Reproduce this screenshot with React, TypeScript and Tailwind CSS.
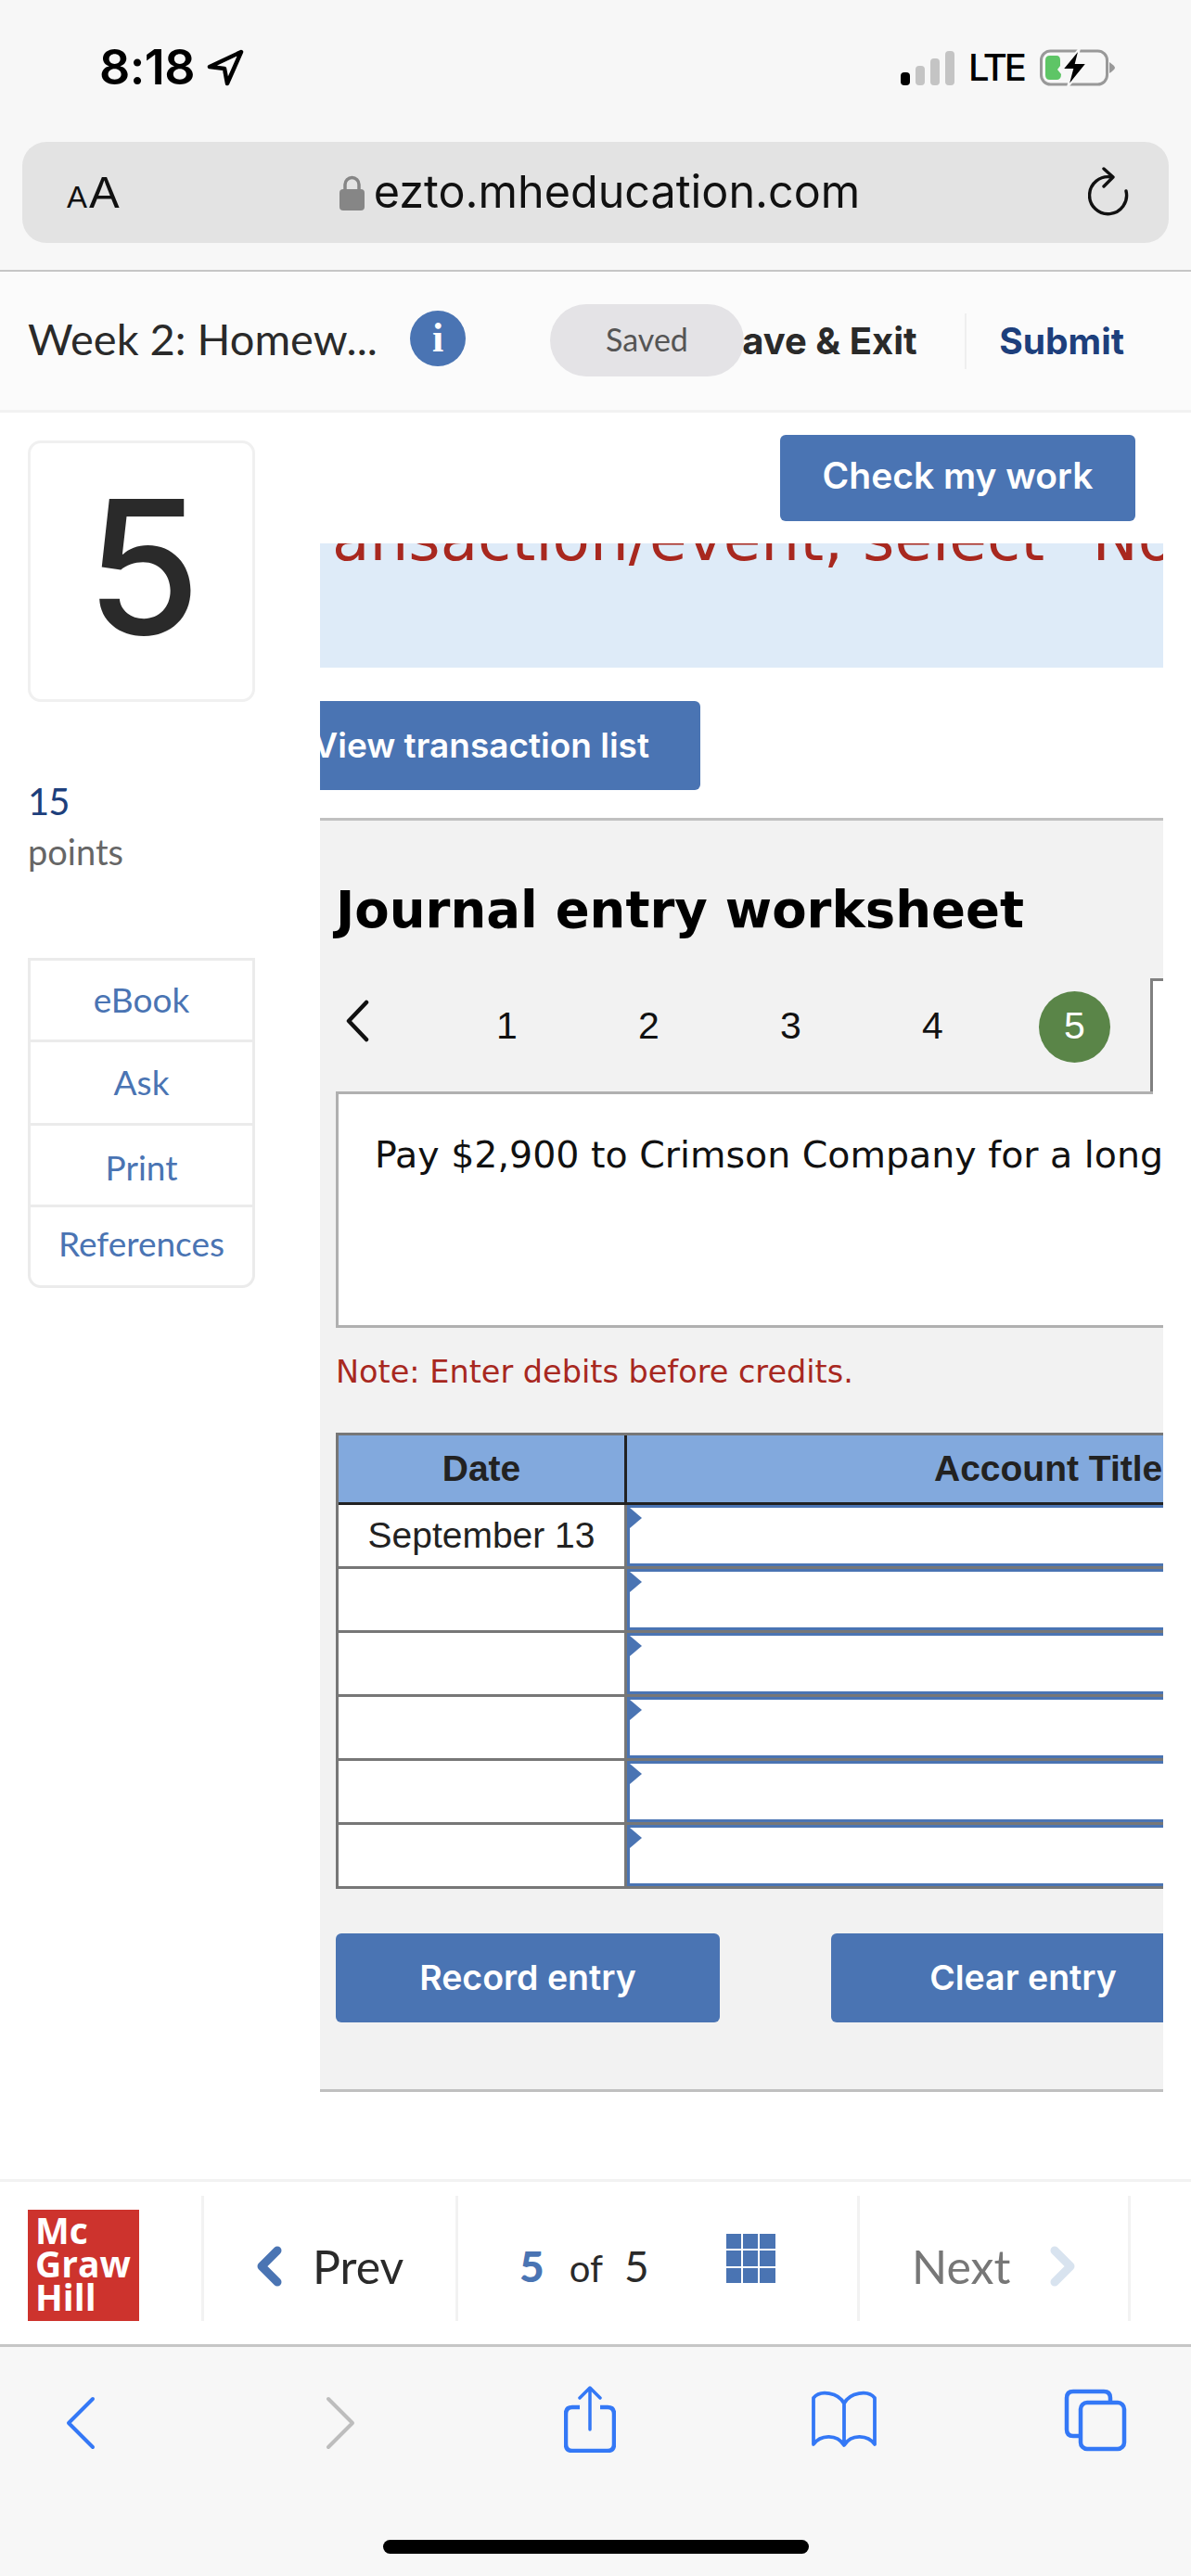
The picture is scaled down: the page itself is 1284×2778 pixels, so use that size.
import React from "react";

const lato = "font-['Lato',sans-serif]";
const dejavu = "font-['DejaVu_Sans',sans-serif]";
const arial = "font-['Liberation_Sans',sans-serif]";
const inter = "font-['Inter',sans-serif]";

function StatusBar() {
  return (
    <div className={`h-[153px] shrink-0 flex items-start justify-between pt-[53px] pl-[107px] pr-[82px] ${inter}`}>
      <div className="flex items-center h-[40px] gap-[13px]">
        <span className="text-[52px] font-semibold leading-none text-black tracking-[-0.5px]">8:18</span>
        <svg width="40" height="40" viewBox="0 0 40 40">
          <path d="M37 3 L3 19 L19 21 L22 37 Z" fill="none" stroke="#000" strokeWidth="4.5" strokeLinejoin="round" />
        </svg>
      </div>
      <div className="flex items-center h-[40px]">
        <div className="flex items-end gap-[6px] h-[38px] mr-[15px]">
          <div className="w-[10px] h-[14px] rounded-[4px] bg-black" />
          <div className="w-[10px] h-[21px] rounded-[4px] bg-[#c4c4c4]" />
          <div className="w-[10px] h-[29px] rounded-[4px] bg-[#c4c4c4]" />
          <div className="w-[10px] h-[37px] rounded-[4px] bg-[#c4c4c4]" />
        </div>
        <span className="text-[40px] font-medium leading-none text-black mr-[17px] tracking-[-3px]">LTE</span>
        <svg width="81" height="42" viewBox="0 0 81 42">
          <rect x="1.5" y="3" width="71" height="36" rx="10" fill="none" stroke="#999" strokeWidth="3" />
          <path d="M75 15 Q81 19 81 21 Q81 23 75 27 Z" fill="#999" />
          <path d="M6 13 Q6 8 11 8 L18 8 Q22 8 22 13 L22 19 L19 23 L23 28 Q23 34 18 34 L11 34 Q6 34 6 29 Z" fill="#5ec566" />
          <path d="M43 0 L24 23 L35 23 L30 42 L51 16 L39 16 Z" fill="#000" stroke="#f7f7f7" strokeWidth="2" />
        </svg>
      </div>
    </div>
  );
}

function AddressBar() {
  return (
    <div className="h-[138px] px-[24px] shrink-0">
      <div className="h-[109px] rounded-[26px] bg-[#e3e3e3] flex items-center relative">
        <div className={`flex items-baseline ml-[48px] text-[#111] ${arial}`}>
          <span className="text-[33px] leading-none">A</span>
          <span className="text-[49px] leading-none ml-[2px]">A</span>
        </div>
        <div className={`flex items-center ml-[237px] ${inter}`}>
          <svg width="27" height="38" viewBox="0 0 27 38" className="mr-[10px]">
            <path d="M6 17 V10 a7.5 7.5 0 0 1 15 0 V17" fill="none" stroke="#868686" strokeWidth="3.5" />
            <rect x="0" y="15" width="27" height="23" rx="4" fill="#868686" />
          </svg>
          <span className="text-[48.5px] leading-none text-[#111]">ezto.mheducation.com</span>
        </div>
        <svg width="46" height="56" viewBox="0 0 46 56" className="ml-[246px]">
          <path d="M25 11 A20 20 0 1 0 41 26" fill="none" stroke="#111" strokeWidth="3.4" strokeLinecap="round" />
          <path d="M17 2 L27 11 L17 21" fill="none" stroke="#111" strokeWidth="3.4" strokeLinecap="round" strokeLinejoin="round" />
        </svg>
      </div>
    </div>
  );
}

function Header() {
  return (
    <div className={`h-[154px] shrink-0 border-t-[2px] border-b-[3px] border-t-[#c6c6c6] border-b-[#f2f2f2] bg-[#fbfbfb] flex items-center pb-[5px] relative ${lato}`}>
      <span className="ml-[30px] text-[47px] leading-none text-[#2a2a2a] w-[412px] whitespace-nowrap">Week 2: Homew...</span>
      <div className="w-[60px] h-[60px] rounded-full bg-[#4a74b3] flex items-center justify-center">
        <span className="text-[44px] font-bold text-white font-['Liberation_Serif',serif] leading-none">i</span>
      </div>
      <span className={`ml-[272px] text-[40px] font-bold text-[#2a2a2a] leading-none mt-[5px] whitespace-nowrap ${inter}`}>Save &amp; Exit</span>
      <div className="w-[2px] h-[60px] bg-[#efefef] ml-auto mt-[6px]" />
      <span className={`ml-[35px] mr-[72px] text-[39px] font-bold text-[#1d3f7c] leading-none mt-[5px] ${inter}`}>Submit</span>
      <div className="absolute left-[593px] top-[35px] w-[209px] h-[78px] rounded-[39px] bg-[#e4e3e6] flex items-center justify-center pb-[2px]">
        <span className="text-[34px] text-[#555] leading-none">Saved</span>
      </div>
    </div>
  );
}

function Sidebar() {
  const items = [
    { t: "eBook", c: "h-[88px] pb-[2px]" },
    { t: "Ask", c: "h-[90px] pb-[2px]" },
    { t: "Print", c: "h-[88px] pt-[4px]" },
    { t: "References", c: "h-[84px] pb-[6px]" },
  ];
  return (
    <div className={`w-[345px] shrink-0 pl-[30px] pt-[30px] ${lato}`}>
      <div className="w-[245px] h-[282px] border-[3px] border-[#f0f0f0] rounded-[14px] flex items-center justify-center pb-[10px] pl-[4px]">
        <span className={`text-[200px] font-medium leading-none text-[#2a2a2a] ${inter}`}>5</span>
      </div>
      <div className="mt-[86px] text-[40px] leading-[42px] text-[#1d3f7c] tracking-[-1px]">15</div>
      <div className="mt-[14px] text-[38px] leading-[38px] text-[#666]">points</div>
      <div className="mt-[96px] w-[245px] border-[3px] border-[#ebebeb] rounded-b-[14px] flex flex-col divide-y-[3px] divide-[#ebebeb]">
        {items.map((i) => (
          <div key={i.t} className={`${i.c} flex items-center justify-center text-[37px] text-[#4a74b3]`}>{i.t}</div>
        ))}
      </div>
    </div>
  );
}

function Flag() {
  return (
    <svg width="14" height="22" viewBox="0 0 14 22" className="absolute left-0 top-0">
      <path d="M0 0 L13 11 L0 22 Z" fill="#4a74b3" />
    </svg>
  );
}

function Table() {
  const rows = ["September 13", "", "", "", "", ""];
  return (
    <div className={`ml-[17px] w-[1000px] border-t-[3px] border-l-[3px] border-[#777] ${arial}`}>
      <div className="flex h-[75px] bg-[#82a9dd] border-b-[3px] border-[#222]">
        <div className="w-[311px] border-r-[3px] border-[#222] flex items-center justify-center text-[39px] font-bold text-[#222]">Date</div>
        <div className="flex-1 flex items-center pl-[331px] text-[39px] font-bold text-[#222] whitespace-nowrap">Account Title</div>
      </div>
      {rows.map((r, i) => (
        <div key={i} className="flex h-[69px] border-b-[3px] border-[#777] bg-white">
          <div className="w-[311px] border-r-[3px] border-[#777] flex items-center justify-center text-[39px] text-[#222]">{r}</div>
          <div className="flex-1 relative border-[3px] border-r-0 border-[#4a74b3]">
            <Flag />
          </div>
        </div>
      ))}
    </div>
  );
}

function Btn({ children, className }: { children: React.ReactNode; className: string }) {
  return (
    <div className={`bg-[#4a74b3] rounded-[6px] flex items-center text-white font-semibold whitespace-nowrap ${inter} ${className}`}>
      {children}
    </div>
  );
}

function Content() {
  const tabs = ["1", "2", "3", "4"];
  return (
    <div className="w-[909px] shrink-0 overflow-hidden">
      <div className="flex justify-end pt-[24px] pr-[30px]">
        <Btn className="w-[383px] h-[93px] justify-center pb-[4px] text-[39px]">Check my work</Btn>
      </div>
      <div className="mt-[24px] h-[134px] bg-[#deebf8] overflow-hidden">
        <div className={`-mt-[37px] ml-[13px] text-[66px] leading-none text-[#a8281f] whitespace-nowrap ${dejavu}`}>
          ansaction/event, select "No
        </div>
      </div>
      <Btn className="mt-[36px] w-[410px] h-[96px] justify-end pr-[55px] rounded-l-none overflow-hidden text-[37px]">View transaction list</Btn>
      <div className="mt-[30px] bg-[#f2f2f2] border-t-[3px] border-b-[3px] border-[#c0c0c0] h-[1374px] overflow-hidden">
        <div className={`ml-[17px] pt-[69px] h-[123px] text-[54.5px] font-bold leading-none text-black whitespace-nowrap ${dejavu}`}>
          Journal entry worksheet
        </div>
        <div className="flex h-[122px] ml-[17px] mt-[47px]">
          <div className="w-[108px] flex items-center pl-[9px] pb-[30px]">
            <svg width="28" height="46" viewBox="0 0 28 46">
              <path d="M24 3 L5 23 L24 43" fill="none" stroke="#111" strokeWidth="4.5" strokeLinecap="round" strokeLinejoin="round" />
            </svg>
          </div>
          {tabs.map((t) => (
            <div key={t} className={`w-[153px] flex items-center justify-center text-[41px] text-[#111] pb-[18px] ${arial}`}>{t}</div>
          ))}
          <div className="w-[153px] flex items-center justify-center pb-[18px]">
            <div className={`w-[77px] h-[77px] rounded-full bg-[#5a8548] flex items-center justify-center text-[41px] text-white ${arial}`}>5</div>
          </div>
          <div className="w-[5px]" />
          <div className="flex-1 bg-white border-l-[3px] border-t-[3px] border-[#808080]" />
        </div>
        <div className="ml-[17px] h-[255px] bg-white border-l-[3px] border-b-[3px] border-[#b0b0b0] overflow-hidden">
          <div className="w-[878px] h-[3px] bg-[#b0b0b0]" />
          <div className={`pl-[39px] pt-[46px] text-[39.5px] leading-none text-[#111] whitespace-nowrap ${dejavu}`}>
            Pay $2,900 to Crimson Company for a long-term note payable.
          </div>
        </div>
        <div className={`ml-[17px] mt-[31px] text-[33.5px] leading-[34px] text-[#a8281f] whitespace-nowrap ${dejavu}`}>
          Note: Enter debits before credits.
        </div>
        <div className="mt-[48px]">
          <Table />
        </div>
        <div className="flex ml-[17px] mt-[48px] w-[1000px]">
          <Btn className="w-[414px] h-[96px] justify-center text-[37.5px]">Record entry</Btn>
          <Btn className="w-[414px] h-[96px] ml-[120px] justify-center text-[37.5px]">Clear entry</Btn>
        </div>
      </div>
    </div>
  );
}

function Divider() {
  return <div className="w-[3px] h-[135px] bg-[#f2f2f2] shrink-0" />;
}

function BottomNav() {
  return (
    <div className={`h-[178px] shrink-0 border-t-[3px] border-[#f2f2f2] bg-white flex items-start pt-[15px] ${lato}`}>
      <div className="w-[217px] h-[135px] flex items-end pl-[30px] shrink-0">
        <div className="w-[120px] h-[120px] bg-[#cd332d] pl-[8px] pt-[4px] text-white font-bold text-[39px] leading-[36px] font-['Open_Sans',sans-serif]">
          <div>Mc</div>
          <div>Graw</div>
          <div>Hill</div>
        </div>
      </div>
      <Divider />
      <div className="w-[271px] h-[135px] flex items-center pl-[55px] pt-[17px] shrink-0">
        <svg width="30" height="44" viewBox="0 0 30 44">
          <path d="M24 5 L7 22 L24 39" fill="none" stroke="#4a74b3" strokeWidth="9" strokeLinecap="round" strokeLinejoin="round" />
        </svg>
        <span className="ml-[32px] text-[50px] text-[#2a2a2a] leading-none">Prev</span>
      </div>
      <Divider />
      <div className="w-[430px] h-[135px] flex items-center pl-[66px] shrink-0">
        <div className="flex items-baseline pt-[17px] leading-none">
          <span className="text-[46px] font-black text-[#4a74b3]">5</span>
          <span className="ml-[27px] text-[40px] text-[#2a2a2a]">of</span>
          <span className="ml-[23px] text-[46px] text-[#2a2a2a]">5</span>
        </div>
        <div className="ml-[83px] grid grid-cols-3 gap-[2px] w-[53px] h-[53px]">
          {Array.from({ length: 9 }).map((_, i) => (
            <div key={i} className="bg-[#4a74b3]" />
          ))}
        </div>
      </div>
      <Divider />
      <div className="w-[289px] h-[135px] flex items-center pl-[56px] pt-[17px] shrink-0">
        <span className="text-[50px] text-[#777] leading-none">Next</span>
        <svg width="30" height="44" viewBox="0 0 30 44" className="ml-[42px]">
          <path d="M6 5 L23 22 L6 39" fill="none" stroke="#d8e3ef" strokeWidth="9" strokeLinecap="round" strokeLinejoin="round" />
        </svg>
      </div>
      <Divider />
    </div>
  );
}

function Toolbar() {
  const c = "#3478f6";
  return (
    <div className="h-[250px] shrink-0 border-t-[3px] border-[#c6c6c6] bg-[#f7f7f7] flex flex-col">
      <div className="flex items-center h-[166px] pl-[70px] pb-[8px] shrink-0">
        <svg width="34" height="58" viewBox="0 0 34 58" className="mt-[6px]">
          <path d="M30 3 L4 29 L30 55" fill="none" stroke={c} strokeWidth="4" strokeLinecap="round" strokeLinejoin="round" />
        </svg>
        <svg width="34" height="58" viewBox="0 0 34 58" className="ml-[246px] mt-[6px]">
          <path d="M4 3 L30 29 L4 55" fill="none" stroke="#bdbdbd" strokeWidth="4" strokeLinecap="round" strokeLinejoin="round" />
        </svg>
        <svg width="56" height="72" viewBox="0 0 56 72" className="ml-[224px] -mt-[2px]">
          <path d="M17 23 H9 Q2 23 2 30 V63 Q2 70 9 70 H47 Q54 70 54 63 V30 Q54 23 47 23 H39" fill="none" stroke={c} strokeWidth="4.5" />
          <path d="M28 47 V2 M17 13 L28 2 L39 13" fill="none" stroke={c} strokeWidth="3.5" strokeLinecap="round" strokeLinejoin="round" />
        </svg>
        <svg width="72" height="62" viewBox="0 0 72 62" className="ml-[210px] -mt-[2px]">
          <path d="M36 14 C30 2 10 -1 3 8 V58 C10 48 28 46 36 59 C44 46 62 48 69 58 V8 C62 -1 42 2 36 14 Z M36 14 V59" fill="none" stroke={c} strokeWidth="3.8" strokeLinejoin="round" />
        </svg>
        <svg width="68" height="68" viewBox="0 0 68 68" className="ml-[201px]">
          <path d="M50 13 V10 Q50 3 43 3 H10 Q3 3 3 10 V44 Q3 51 10 51 H18" fill="none" stroke={c} strokeWidth="4.5" />
          <rect x="18" y="15" width="47" height="50" rx="7" fill="none" stroke={c} strokeWidth="4.5" />
        </svg>
      </div>
      <div className="flex justify-center pt-[42px]">
        <div className="w-[459px] h-[15px] rounded-full bg-black" />
      </div>
    </div>
  );
}

export default function App() {
  return (
    <div className="w-[1284px] h-[2778px] flex flex-col overflow-hidden bg-[#f7f7f7]">
      <StatusBar />
      <AddressBar />
      <Header />
      <div className="h-[1905px] bg-white flex shrink-0 overflow-hidden">
        <Sidebar />
        <Content />
      </div>
      <BottomNav />
      <Toolbar />
    </div>
  );
}
